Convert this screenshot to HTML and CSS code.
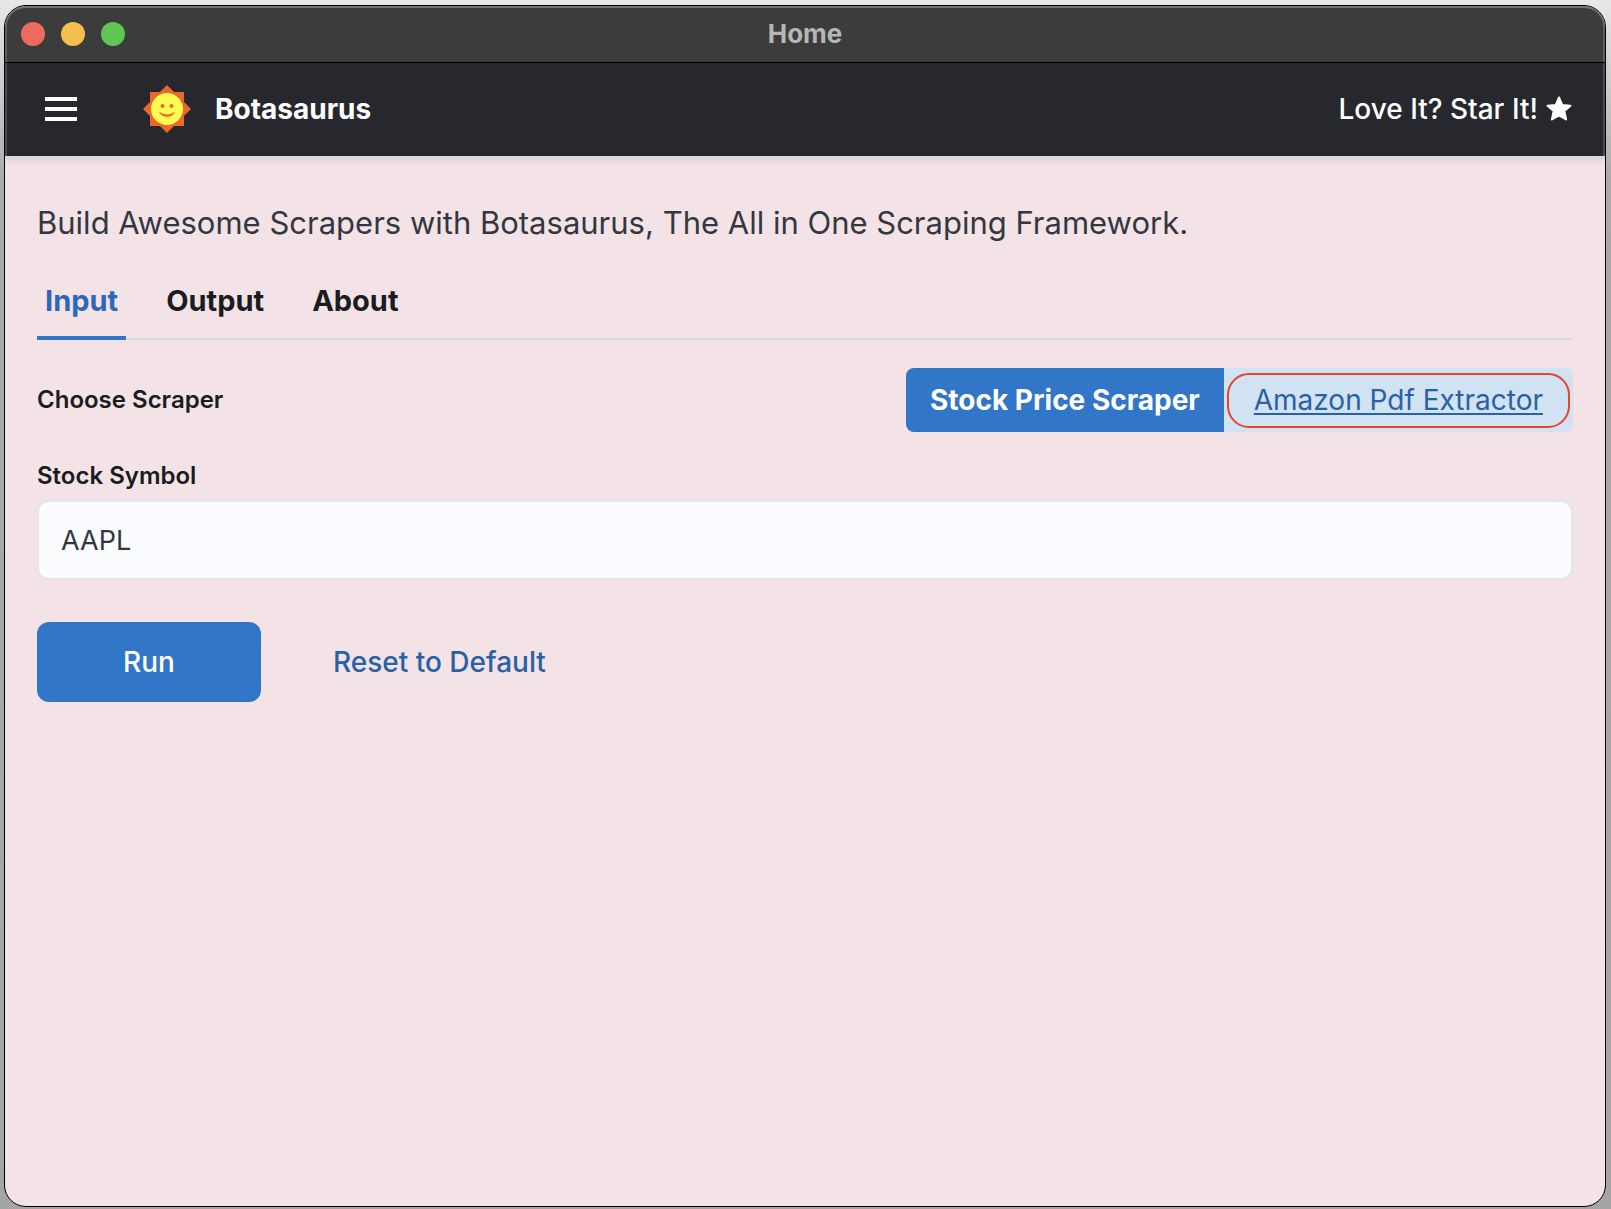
FILE: index.html
```html
<!DOCTYPE html>
<html lang="en">
<head>
<meta charset="utf-8">
<meta name="viewport" content="width=device-width, initial-scale=1">
<title>Home</title>
<link rel="stylesheet" href="styles.css">
</head>
<body>
<div class="window">
  <div class="titlebar">
    <div class="lights">
      <span class="light light-close"></span>
      <span class="light light-minimize"></span>
      <span class="light light-zoom"></span>
    </div>
    <div class="window-title">Home</div>
  </div>
  <header class="header">
    <button class="menu" type="button" aria-label="Menu">
      <svg width="32" height="24" viewBox="0 0 32 24" fill="#fff" aria-hidden="true"><path d="M0 0h32v4H0zM0 10h32v4H0zM0 20h32v4H0z"/></svg>
    </button>
    <a class="brand" href="#">
      <svg width="48" height="48" viewBox="-24 -24 48 48" aria-hidden="true">
        <path fill="#ec672c" d="M-17-17H17V17H-17zM0-24L24 0 0 24-24 0z"/>
        <circle r="16" fill="#fffd54"/>
        <circle cx="-4.5" cy="-3" r="2" fill="#ec672c"/>
        <circle cx="4.5" cy="-3" r="2" fill="#ec672c"/>
        <path fill="#ec672c" d="M-8 2.8Q0 8 8 2.8Q6 7.8 0 7.8T-8 2.8z"/>
      </svg>
      <span>Botasaurus</span>
    </a>
    <a class="star-link" href="#">
      <span>Love It? Star It!</span>
      <svg width="26" height="26" viewBox="0 0 26 26" aria-hidden="true"><path fill="#fff" stroke="#fff" stroke-width="2" stroke-linejoin="round" d="M13 1.500l3.200 7.400 8.300.8-6.200 5.300 1.800 8.500L13 19.300l-7.100 4.200 1.800-8.500L1.500 9.700l8.300-.8z"/></svg>
    </a>
  </header>
  <main class="content">
    <p class="tagline">Build Awesome Scrapers with Botasaurus, The All in One Scraping Framework.</p>
    <nav class="tabs">
      <a class="tab tab-active" href="#">Input</a>
      <a class="tab" href="#">Output</a>
      <a class="tab" href="#">About</a>
    </nav>
    <form class="form">
      <div class="chooser">
        <span class="label" id="scraper-label">Choose Scraper</span>
        <div class="segments" role="group" aria-labelledby="scraper-label">
          <button class="segment segment-selected" type="button">Stock Price Scraper</button>
          <button class="segment segment-marked" type="button">Amazon Pdf Extractor</button>
        </div>
      </div>
      <div class="field">
        <label class="label" for="symbol">Stock Symbol</label>
        <input class="input" id="symbol" type="text" value="AAPL">
      </div>
      <div class="actions">
        <button class="run" type="button">Run</button>
        <button class="reset" type="button">Reset to Default</button>
      </div>
    </form>
  </main>
</div>
</body>
</html>
```
FILE: styles.css
```css
* {
  box-sizing: border-box;
}

body {
  margin: 0;
  min-height: 100vh;
  padding: 5px 5px 2px 4px;
  display: flex;
  background: linear-gradient(#e8e8e8, #a9abab 180px, #a4a6a6);
  font-family: Inter, "Liberation Sans", sans-serif;
  font-size: 28px;
  line-height: 32px;
  color: #1a1c22;
}

button,
input {
  font: inherit;
}

button {
  border: 0;
  padding: 0;
  background: none;
  cursor: pointer;
}

a {
  color: inherit;
  text-decoration: none;
}

svg {
  display: block;
  flex: none;
}

.window {
  flex: 1;
  min-width: 0;
  display: flex;
  flex-direction: column;
  border: 1px solid #000;
  border-radius: 22px;
  overflow: hidden;
  background: #f3e3e6;
}

.titlebar {
  display: grid;
  grid-template-columns: 1fr auto 1fr;
  align-items: center;
  height: 57px;
  padding: 0 16px;
  background: #3c3c3c;
  border-bottom: 1px solid #000;
  border-radius: 21px 21px 0 0;
  box-shadow: inset 0 2px #747474, inset 2px 0 #5e5e5e, inset -2px 0 #5e5e5e;
}

.lights {
  display: flex;
  gap: 16px;
}

.light {
  width: 24px;
  height: 24px;
  border-radius: 50%;
}

.light-close {
  background: #ed6a5e;
}

.light-minimize {
  background: #f5bf4f;
}

.light-zoom {
  background: #61c554;
}

.window-title {
  font-size: 26px;
  font-weight: 700;
  color: #b6b6b6;
}

.header {
  display: flex;
  align-items: center;
  height: 95px;
  padding: 0 33px 2px 40px;
  background: #27282d;
  border-bottom: 2px solid #d2dae6;
  box-shadow: inset 2px 0 #4c4d51, inset -2px 0 #4c4d51, 0 2px 6px rgba(0, 0, 0, 0.1);
  color: #fff;
}

.brand {
  display: flex;
  align-items: center;
  gap: 24px;
  margin-left: 66px;
  font-weight: 700;
}

.star-link {
  display: flex;
  align-items: center;
  gap: 8px;
  margin-left: auto;
  font-weight: 500;
}

.content {
  padding: 45px 32px;
}

.tagline {
  margin: 0;
  font-size: 31px;
  line-height: 40px;
  color: #343741;
}

.tabs {
  display: flex;
  gap: 32px;
  margin-top: 30px;
  border-bottom: 2px solid #d3dae6;
}

.tab {
  margin-bottom: -2px;
  padding: 12px 8px 19px;
  border-bottom: 4px solid transparent;
  font-size: 29px;
  font-weight: 700;
}

.tab-active {
  color: #2b68b8;
  border-color: #3276c8;
}

.form {
  margin-top: 28px;
}

.chooser {
  display: flex;
  align-items: center;
  justify-content: space-between;
}

.label {
  font-size: 24px;
  font-weight: 600;
}

.segments {
  display: flex;
  border-radius: 8px;
  overflow: hidden;
  background: #d1e2f2;
}

.segment {
  height: 64px;
  padding: 0 24px;
}

.segment-selected {
  background: #3276c8;
  color: #fff;
  font-weight: 700;
}

.segment-marked {
  position: relative;
  padding: 0 30px;
  color: #2a61a4;
  text-decoration: underline;
  text-decoration-thickness: 2px;
  text-underline-offset: 3px;
}

.segment-marked::after {
  content: "";
  position: absolute;
  inset: 5px 3px 4px;
  border: 2px solid #e8432a;
  border-radius: 22px;
}

.field {
  display: flex;
  flex-direction: column;
  gap: 8px;
  margin-top: 28px;
}

.input {
  width: 100%;
  height: 80px;
  padding: 0 22px;
  border: 2px solid #e4e6ec;
  border-radius: 12px;
  background: #fafcff;
  color: #343741;
  font-size: 27px;
}

.actions {
  display: flex;
  align-items: center;
  gap: 72px;
  margin-top: 42px;
}

.run {
  width: 224px;
  height: 80px;
  border-radius: 12px;
  background: #3276c8;
  color: #fff;
  font-weight: 500;
}

.reset {
  color: #2a61a4;
  font-weight: 500;
}
```
